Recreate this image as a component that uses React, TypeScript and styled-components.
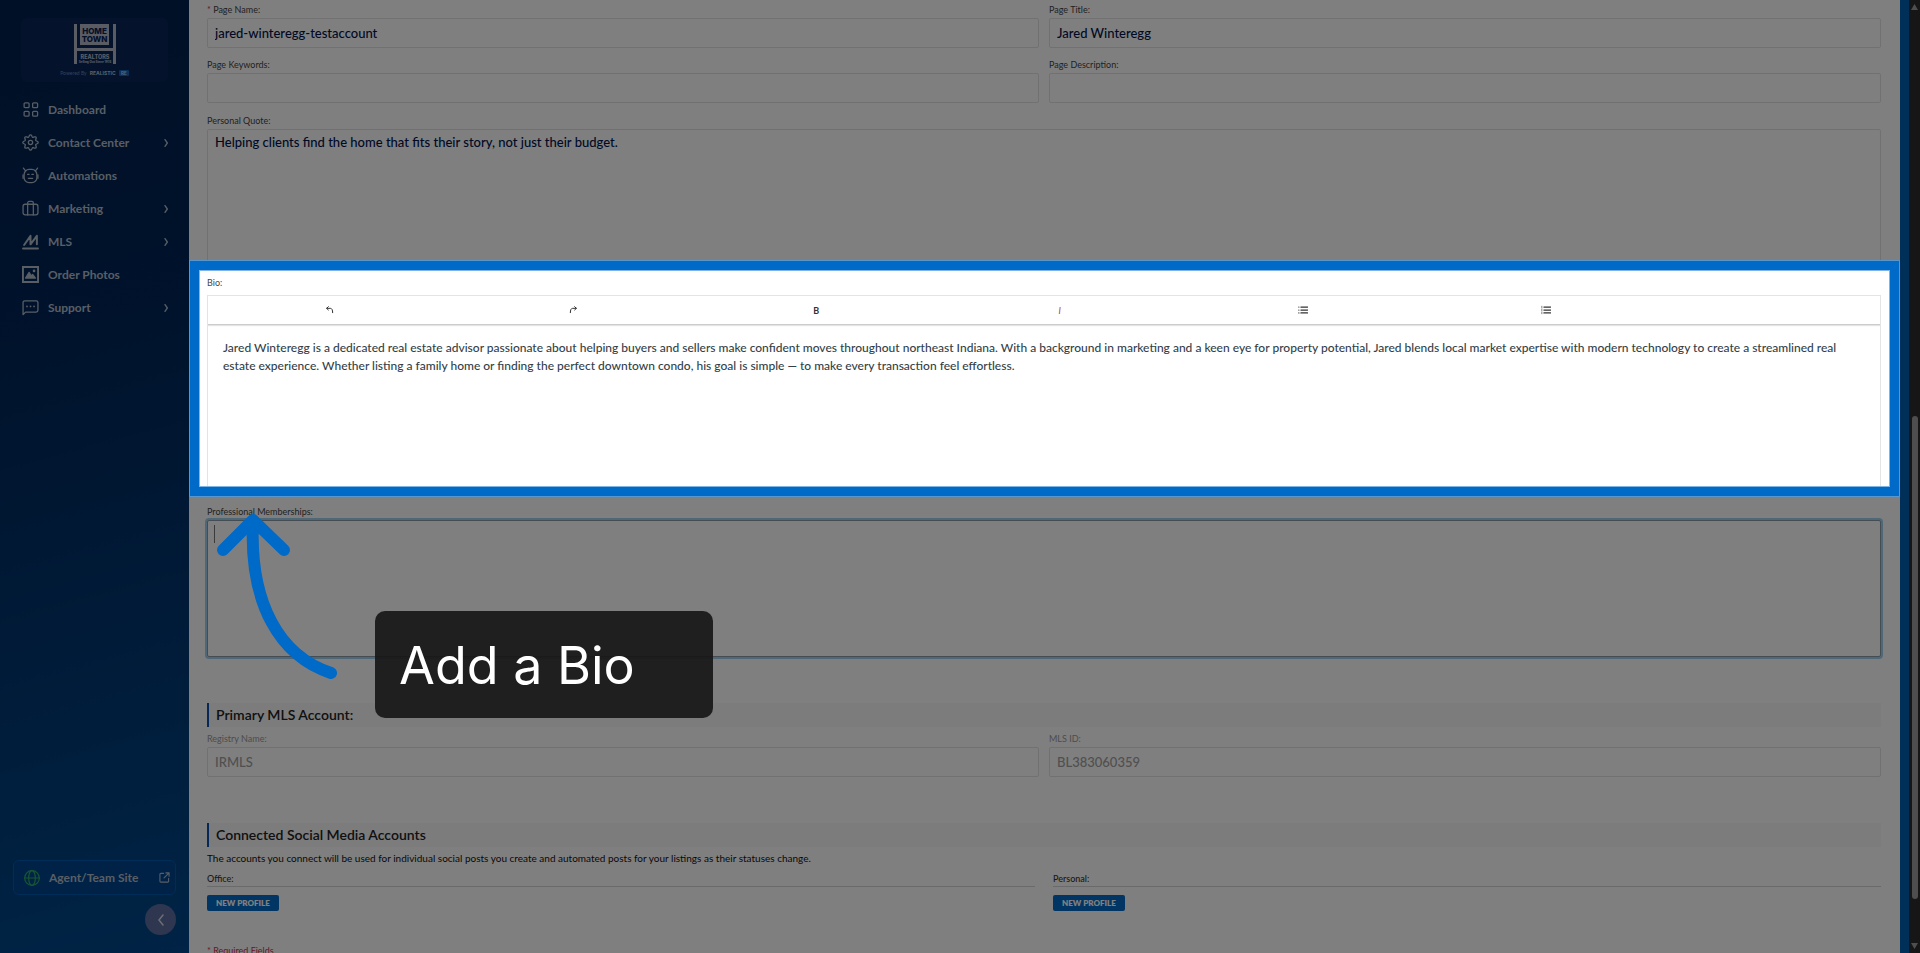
import React from "react";
import styled, { createGlobalStyle } from "styled-components";

const GlobalStyle = createGlobalStyle`
  * { box-sizing: border-box; }
  body { margin: 0; font-family: Lato, "Liberation Sans", sans-serif; }
  button, input, textarea { font: inherit; margin: 0; }
`;

const accent = "#006ac8";

const Shell = styled.div`
  position: relative;
  display: flex;
  height: 100vh;
  overflow: hidden;
  background: #0060b4;
`;

const Sidebar = styled.aside`
  flex: none;
  display: flex;
  flex-direction: column;
  width: 189px;
  padding: 18px 13px;
  background: linear-gradient(165deg, #00204c 0%, #002658 35%, #00488c 100%);
`;

const LogoCard = styled.div`
  display: flex;
  flex-direction: column;
  align-items: center;
  gap: 6px;
  height: 64px;
  margin: 0 8px 11px;
  padding-top: 6px;
  border-radius: 6px;
  background: #0a2558;
`;

const Powered = styled.div`
  display: flex;
  align-items: center;
  gap: 3px;
  font-size: 5px;
  line-height: 6px;
  color: #6684b4;
`;

const PoweredName = styled.strong`
  font-family: Inter, sans-serif;
  color: #b4c0d4;
`;

const PoweredBadge = styled.strong`
  padding: 0 2px;
  border-radius: 1px;
  background: #1262b4;
  color: #b4c8e4;
`;

const NavLink = styled.a`
  display: flex;
  align-items: center;
  gap: 9px;
  height: 33px;
  padding: 0 6px 0 9px;
  font-size: 12px;
  font-weight: 700;
  line-height: 18px;
  color: #b2bccb;
  text-decoration: none;
  white-space: nowrap;
  svg { flex: none; }
`;

const Grow = styled.span`
  flex: 1;
`;

const SiteLink = styled(NavLink)`
  height: 35px;
  margin-top: auto;
  padding: 0 5px 0 10px;
  border: 1px solid #005aae;
  border-radius: 6px;
  background: #00458c;
`;

const SiteIcon = styled.span`
  display: flex;
  color: #2fae62;
`;

const Collapse = styled.button`
  display: grid;
  place-items: center;
  align-self: flex-end;
  width: 31px;
  height: 31px;
  margin-top: 9px;
  padding: 0;
  border: 0;
  border-radius: 50%;
  background: #5c6ca0;
  color: #d8dce8;
`;

const Main = styled.main`
  flex: 1;
  min-width: 0;
  padding: 2px 19px 0 18px;
  background: #fff;
`;

const Columns = styled.div<{ $gap?: number; $below?: number }>`
  display: grid;
  grid-template-columns: 1fr 1fr;
  column-gap: ${(p) => p.$gap ?? 10}px;
  margin-bottom: ${(p) => p.$below ?? 9}px;
`;

const Field = styled.div`
  display: flex;
  flex-direction: column;
`;

const Label = styled.label<{ $muted?: boolean }>`
  display: block;
  font-size: 9px;
  line-height: 16px;
  color: ${(p) => (p.$muted ? "#9a9a9a" : "#444")};
`;

const Star = styled.span`
  color: #d03040;
`;

const Input = styled.input`
  width: 100%;
  height: 30px;
  padding: 0 7px 1px;
  border: 1px solid #e2e2e2;
  border-radius: 2px;
  background: #fff;
  font-size: 13px;
  font-weight: 500;
  line-height: 18px;
  color: #00124a;
  outline: 0;
  &:disabled { color: #a0a0a0; }
`;

const TextArea = styled.textarea<{ $focused?: boolean }>`
  display: block;
  width: 100%;
  height: 137px;
  padding: 3px 7px;
  border: 1px solid ${(p) => (p.$focused ? "#8a9aa6" : "#e2e2e2")};
  border-radius: 2px;
  box-shadow: ${(p) => (p.$focused ? "0 0 0 2px #9fd0ee" : "none")};
  background: #fff;
  font-size: 13px;
  font-weight: 500;
  line-height: 18px;
  color: #00124a;
  outline: 0;
  resize: none;
`;

const CaretBox = styled.div`
  position: relative;
`;

const Caret = styled.span`
  position: absolute;
  left: 7px;
  top: 5px;
  width: 1px;
  height: 18px;
  background: #777;
`;

const BioSection = styled.section`
  position: relative;
  margin: 9px 0;
`;

const Spotlight = styled.div`
  position: absolute;
  z-index: 2;
  inset: -14px -18px -1px -17px;
  border: 9px solid ${accent};
  box-shadow: 0 0 0 1px #5896cc, inset 0 0 0 1px #80b4e2, 0 0 0 9999px rgba(0, 0, 0, 0.5);
  pointer-events: none;
`;

const Editor = styled.div`
  height: 200px;
  margin-top: 4px;
  border: 1px solid #e4e4e4;
`;

const Toolbar = styled.div`
  display: flex;
  align-items: center;
  height: 29px;
  padding-right: 212px;
  border-bottom: 1px solid #ccc;
  box-shadow: 0 1px 1px #e4e4e4;
`;

const Tool = styled.button<{ $red?: boolean }>`
  flex: 1;
  display: grid;
  place-items: center;
  height: 16px;
  padding: 0;
  border: 0;
  background: none;
  font-size: 9px;
  color: ${(p) => (p.$red ? "#b83838" : "#333")};
`;

const BioText = styled.p`
  margin: 0;
  padding: 14px 15px;
  font-size: 12px;
  font-weight: 500;
  line-height: 18px;
  color: #333f48;
`;

const SectionTitle = styled.h2<{ $tight?: boolean }>`
  margin: 46px 0 ${(p) => (p.$tight ? 3 : 4)}px;
  padding-left: 7px;
  border-left: 2px solid #0a50b0;
  background: #f8f8f8;
  font-size: 14px;
  font-weight: 600;
  line-height: 24px;
  color: #222;
`;

const Note = styled.p`
  margin: 0 0 5px;
  font-size: 10px;
  line-height: 16px;
  color: #111;
`;

const AccountName = styled.h3`
  margin: 0 0 8px;
  border-bottom: 1px solid #d4d4d4;
  font-size: 9px;
  font-weight: 500;
  line-height: 15px;
  color: #333;
`;

const ProfileButton = styled.button`
  display: block;
  height: 16px;
  padding: 0 9px;
  border: 0;
  border-radius: 2px;
  background: ${accent};
  font-size: 8px;
  font-weight: 800;
  line-height: 16px;
  color: #fff;
`;

const Required = styled.p`
  margin: 32px 0 0;
  font-size: 9px;
  line-height: 16px;
  color: #d03050;
`;

const ScrollTrack = styled.div`
  flex: none;
  display: flex;
  flex-direction: column;
  align-items: center;
  justify-content: space-between;
  width: 11px;
  margin-left: 9px;
  padding: 3px 0;
  background: #2c2c2c;
`;

const ScrollThumb = styled.div`
  width: 6px;
  height: 51%;
  margin-top: auto;
  margin-bottom: 44px;
  border-radius: 3px;
  background: #9c9c9c;
`;

const Arrow = styled.svg`
  position: absolute;
  z-index: 3;
  left: 210px;
  top: 508px;
`;

const Callout = styled.div`
  position: absolute;
  z-index: 3;
  left: 375px;
  top: 611px;
  width: 338px;
  padding: 21px 24px 19px;
  border-radius: 10px;
  background: rgba(21, 21, 21, 0.9);
  font-family: Inter, sans-serif;
  font-size: 52px;
  line-height: 67px;
  color: #fff;
`;

const Icon = ({ children, size = 17, width = 1.8 }: { children: React.ReactNode; size?: number; width?: number }) => (
  <svg width={size} height={size} viewBox="0 0 24 24" fill="none" stroke="currentColor" strokeWidth={width} strokeLinecap="round" strokeLinejoin="round" aria-hidden="true">
    {children}
  </svg>
);

const gearPath = Array.from({ length: 64 }, (_, i) => {
  const a = (i / 64) * Math.PI * 2;
  const r = 9.4 + 1.5 * Math.cos(a * 8);
  return `${i ? "L" : "M"}${(12 + r * Math.cos(a)).toFixed(2)} ${(12 + r * Math.sin(a)).toFixed(2)}`;
}).join("") + "Z";

const nav: { name: string; more?: boolean; icon: React.ReactNode }[] = [
  { name: "Dashboard", icon: <><rect x="3" y="2.500" width="7" height="7" rx="1.5" /><rect x="15" y="2.500" width="7" height="7" rx="1.5" /><rect x="3" y="14.500" width="7" height="7" rx="1.5" /><rect x="15" y="14.500" width="7" height="7" rx="1.5" /></> },
  { name: "Contact Center", more: true, icon: <><path d={gearPath} /><circle cx="12" cy="12" r="3" /></> },
  { name: "Automations", icon: <><path d="M2 1.500l3 4M22 1.500l-3 4" /><rect x="3" y="3.500" width="18" height="18.500" rx="7" /><path d="M1.500 11v5M22.500 11v5M8 10.500h2M14 10.500h2M9 16h6" /></> },
  { name: "Marketing", more: true, icon: <><rect x="1.500" y="6" width="21" height="15" rx="3" /><path d="M8 21V4a2 2 0 012-2h4a2 2 0 012 2v17" /></> },
  { name: "MLS", more: true, icon: <path d="M1.500 22h21M3 17L12 4v12L21 4v12" strokeWidth="2.8" /> },
  { name: "Order Photos", icon: <><rect x="1" y="1" width="22" height="22" strokeWidth="3.4" /><path d="M5 17l5-8 3 5 2-2 4 5z" fill="currentColor" /><circle cx="17" cy="7" r="1" /></> },
  { name: "Support", more: true, icon: <><path d="M1.500 22V5a2.500 2.500 0 012.500-2.500h16A2.500 2.500 0 0122.500 5v11a2.500 2.500 0 01-2.500 2.500H5z" /><path d="M7 10.500h.1M12 10.500h.1M17 10.500h.1" strokeWidth="2.400" /></> },
];

const Logo = () => (
  <svg width="42" height="40" viewBox="0 0 42 40" role="img" aria-label="Home Town Realtors">
    <g fill="#b4b8c8">
      <path d="M0 0h3v40H0zM39 0h3v40h-3zM3 24h36v3H3zM6 0h29v21H6z" />
      <g fontFamily="Inter, sans-serif" fontWeight="800" textAnchor="middle">
        <g fill="#0a2050" fontSize="8"><text x="20.500" y="9.500">HOME</text><text x="20.500" y="17.500">TOWN</text></g>
        <text x="21" y="35" fontSize="5.500">REALTORS</text>
        <text x="21" y="39" fontSize="3">Selling Out Since 1974</text>
      </g>
    </g>
  </svg>
);

const Chevron = () => <Icon size={8} width={4}><path d="M9 2l7 10-7 10" /></Icon>;

export default function App() {
  return (
    <Shell>
      <GlobalStyle />
      <Sidebar>
        <LogoCard>
          <Logo />
          <Powered>Powered By <PoweredName>REALISTIC</PoweredName><PoweredBadge>RE</PoweredBadge></Powered>
        </LogoCard>
        <nav>
          {nav.map((n) => (
            <NavLink href="#" key={n.name}>
              <Icon>{n.icon}</Icon>
              <Grow>{n.name}</Grow>
              {n.more && <Chevron />}
            </NavLink>
          ))}
        </nav>
        <SiteLink href="#">
          <SiteIcon><Icon size={16}><circle cx="12" cy="12" r="11" /><ellipse cx="12" cy="12" rx="5" ry="11" /><path d="M1 12h22" /></Icon></SiteIcon>
          <Grow>Agent/Team Site</Grow>
          <Icon size={11} width={2.4}><path d="M10 3H4a2 2 0 00-2 2v15a2 2 0 002 2h15a2 2 0 002-2v-6M15 2h7v7M22 2L11 13" /></Icon>
        </SiteLink>
        <Collapse aria-label="Collapse sidebar"><Icon size={12} width={3}><path d="M16 2l-8 10 8 10" /></Icon></Collapse>
      </Sidebar>

      <Main>
        <Columns>
          <Field><Label htmlFor="name"><Star>*</Star> Page Name:</Label><Input id="name" defaultValue="jared-winteregg-testaccount" /></Field>
          <Field><Label htmlFor="title">Page Title:</Label><Input id="title" defaultValue="Jared Winteregg" /></Field>
        </Columns>
        <Columns $below={10}>
          <Field><Label htmlFor="keywords">Page Keywords:</Label><Input id="keywords" /></Field>
          <Field><Label htmlFor="description">Page Description:</Label><Input id="description" /></Field>
        </Columns>
        <Field><Label htmlFor="quote">Personal Quote:</Label><TextArea id="quote" defaultValue="Helping clients find the home that fits their story, not just their budget." /></Field>
        <BioSection>
          <Label as="span">Bio:</Label>
          <Editor>
            <Toolbar>
              <Tool aria-label="Undo"><Icon size={8} width={3}><path d="M7 2L2 7l5 5M2 7h11q7 0 7 13" /></Icon></Tool>
              <Tool aria-label="Redo"><Icon size={8} width={3}><path d="M17 2l5 5-5 5M22 7H11Q4 7 4 20" /></Icon></Tool>
              <Tool aria-label="Bold"><b>B</b></Tool>
              <Tool aria-label="Italic" $red><i>I</i></Tool>
              <Tool aria-label="Bulleted list"><Icon size={10} width={3}><path d="M7 5h16M7 12h16M7 19h16M2 5h.1M2 12h.1M2 19h.1" /></Icon></Tool>
              <Tool aria-label="Numbered list"><Icon size={10} width={3}><path d="M7 5h16M7 12h16M7 19h16" /><path d="M2 3v4M2 10v4M2 17v4" strokeWidth="1.5" /></Icon></Tool>
            </Toolbar>
            <BioText>Jared Winteregg is a dedicated real estate advisor passionate about helping buyers and sellers make confident moves throughout northeast Indiana. With a background in marketing and a keen eye for property potential, Jared blends local market expertise with modern technology to create a streamlined real estate experience. Whether listing a family home or finding the perfect downtown condo, his goal is simple — to make every transaction feel effortless.</BioText>
          </Editor>
          <Spotlight />
        </BioSection>
        <Label htmlFor="memberships">Professional Memberships:</Label>
        <CaretBox><TextArea id="memberships" $focused /><Caret /></CaretBox>

        <SectionTitle>Primary MLS Account:</SectionTitle>
        <Columns>
          <Field><Label $muted htmlFor="registry">Registry Name:</Label><Input id="registry" disabled defaultValue="IRMLS" /></Field>
          <Field><Label $muted htmlFor="mls">MLS ID:</Label><Input id="mls" disabled defaultValue="BL383060359" /></Field>
        </Columns>

        <SectionTitle $tight>Connected Social Media Accounts</SectionTitle>
        <Note>The accounts you connect will be used for individual social posts you create and automated posts for your listings as their statuses change.</Note>
        <Columns $gap={18}>
          <div><AccountName>Office:</AccountName><ProfileButton>NEW PROFILE</ProfileButton></div>
          <div><AccountName>Personal:</AccountName><ProfileButton>NEW PROFILE</ProfileButton></div>
        </Columns>
        <Required>* Required Fields</Required>
      </Main>

      <ScrollTrack aria-hidden="true">
        <svg width="7" height="7"><path d="M3.500 1L7 7H0z" fill="#9c9c9c" /></svg>
        <ScrollThumb />
        <svg width="7" height="7"><path d="M0 0h7L3.500 6z" fill="#9c9c9c" /></svg>
      </ScrollTrack>

      <Arrow width="132" height="176" viewBox="210 508 132 176" fill="none" stroke={accent} strokeWidth="12" strokeLinecap="round" strokeLinejoin="round" aria-hidden="true">
        <path d="M223 550l30-30 31 30M253 521C249 604 280 656 331 673" />
      </Arrow>
      <Callout>Add a Bio</Callout>
    </Shell>
  );
}
